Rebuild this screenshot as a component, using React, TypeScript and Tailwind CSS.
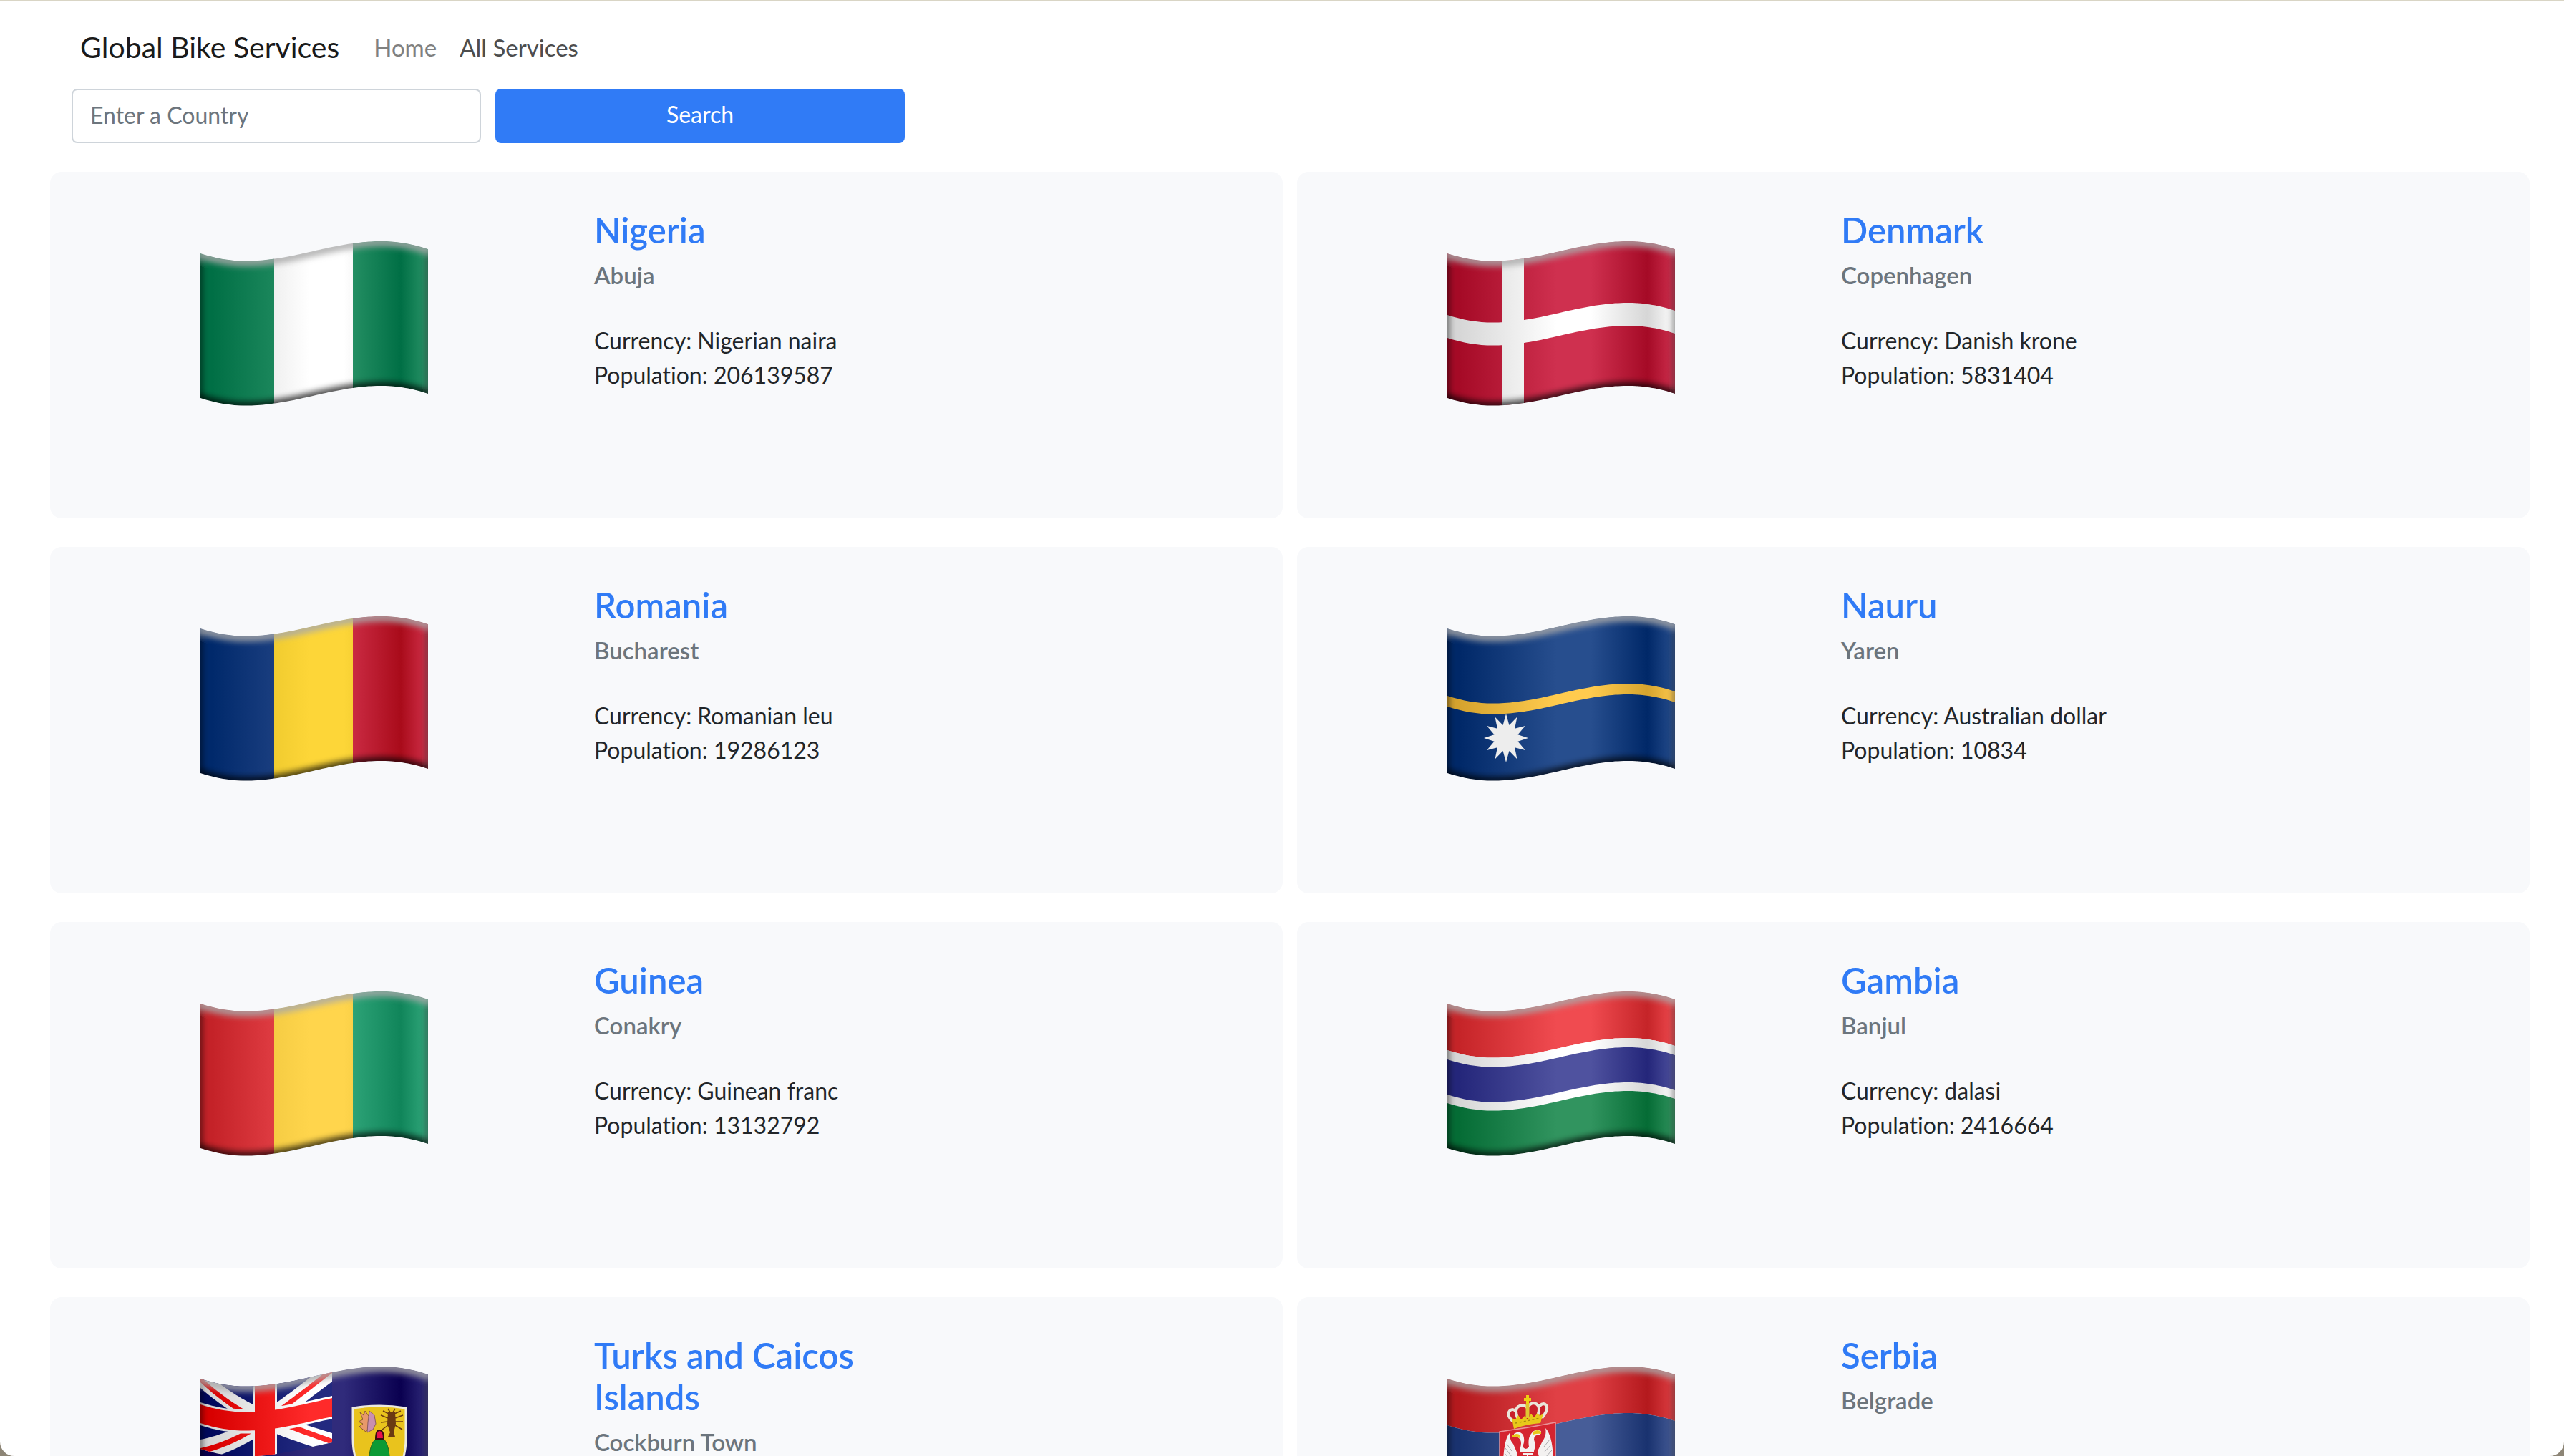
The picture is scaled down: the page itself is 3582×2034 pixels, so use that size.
import React, { useId } from "react";

const FLAG_W = 318;
const FLAG_H = 230;
const CLOTH_H = 202;

type Point = [number, number];
type Tone = { dark: string; light: string };

/** Vertical displacement of the cloth at a given x. */
function wave(x: number): number {
  if (x < 63) return 27.5 - 10.5 * ((63 - x) / 63) ** 2;
  if (x < 253) return 13.75 + 13.75 * Math.cos((Math.PI * (x - 63)) / 190);
  return 11 * ((x - 253) / 65) ** 2;
}

/** Bends a polygon given in flat cloth coordinates along the wave. */
function bend(points: Point[], close = true): string {
  const out: string[] = [];
  const last = close ? points.length : points.length - 1;
  for (let i = 0; i < last; i++) {
    const [x0, y0] = points[i];
    const [x1, y1] = points[(i + 1) % points.length];
    const steps = Math.max(1, Math.ceil(Math.abs(x1 - x0) / 4));
    for (let s = 0; s <= steps; s++) {
      const x = x0 + ((x1 - x0) * s) / steps;
      const y = y0 + ((y1 - y0) * s) / steps;
      out.push(`${x.toFixed(1)} ${(y + wave(x)).toFixed(1)}`);
    }
  }
  return `M${out.join("L")}${close ? "Z" : ""}`;
}

function rect(x0: number, y0: number, x1: number, y1: number): string {
  return bend([
    [x0, y0],
    [x1, y0],
    [x1, y1],
    [x0, y1],
  ]);
}

const TONES: Record<string, Tone> = {
  white: { dark: "#d6d6d6", light: "#ffffff" },
  ngGreen: { dark: "#006f45", light: "#2a9468" },
  dkRed: { dark: "#a50a26", light: "#cf304f" },
  roBlue: { dark: "#00296b", light: "#28498a" },
  roYellow: { dark: "#dcba20", light: "#fdd638" },
  roRed: { dark: "#a90b1a", light: "#d0304a" },
  nrBlue: { dark: "#002868", light: "#274e8e" },
  nrYellow: { dark: "#d5a32e", light: "#ffcb4e" },
  gnRed: { dark: "#c42228", light: "#ee4a50" },
  gnYellow: { dark: "#e4bd35", light: "#ffd54c" },
  gnGreen: { dark: "#10855a", light: "#32a87c" },
  gmRed: { dark: "#c52428", light: "#f04b50" },
  gmBlue: { dark: "#24267a", light: "#4f529f" },
  gmGreen: { dark: "#056c35", light: "#31945f" },
  tcBlue: { dark: "#0a0050", light: "#302b7b" },
  ukBlue: { dark: "#00085c", light: "#232a80" },
  ukRed: { dark: "#d80000", light: "#ff2a2a" },
  rsRed: { dark: "#b4191d", light: "#e04045" },
  rsBlue: { dark: "#19326f", light: "#475d98" },
};

type Band = { tone: string; box: [number, number, number, number] };

const vertical = (a: string, b: string, c: string): Band[] => [
  { tone: a, box: [0, 0, 103, CLOTH_H] },
  { tone: b, box: [103, 0, 213, CLOTH_H] },
  { tone: c, box: [213, 0, FLAG_W, CLOTH_H] },
];

const BANDS: Record<string, Band[]> = {
  ng: vertical("ngGreen", "white", "ngGreen"),
  dk: [
    { tone: "dkRed", box: [0, 0, FLAG_W, CLOTH_H] },
    { tone: "white", box: [77, 0, 107, CLOTH_H] },
    { tone: "white", box: [0, 86, FLAG_W, 118] },
  ],
  ro: vertical("roBlue", "roYellow", "roRed"),
  nr: [
    { tone: "nrBlue", box: [0, 0, FLAG_W, CLOTH_H] },
    { tone: "nrYellow", box: [0, 94, FLAG_W, 109] },
  ],
  gn: vertical("gnRed", "gnYellow", "gnGreen"),
  gm: [
    { tone: "gmRed", box: [0, 0, FLAG_W, 65] },
    { tone: "white", box: [0, 65, FLAG_W, 139] },
    { tone: "gmBlue", box: [0, 78, FLAG_W, 127] },
    { tone: "gmGreen", box: [0, 139, FLAG_W, CLOTH_H] },
  ],
  tc: [
    { tone: "tcBlue", box: [0, 0, FLAG_W, CLOTH_H] },
    { tone: "ukBlue", box: [0, 0, 184, 98] },
  ],
  rs: [
    { tone: "rsRed", box: [0, 0, FLAG_W, 65] },
    { tone: "rsBlue", box: [0, 65, FLAG_W, 134] },
    { tone: "white", box: [0, 134, FLAG_W, CLOTH_H] },
  ],
};

function starPoints(cx: number, cy: number, rx: number, ry: number): string {
  const pts: string[] = [];
  for (let i = 0; i < 24; i++) {
    const k = i % 2 === 0 ? 1 : 0.55;
    const a = (i * Math.PI) / 12 - Math.PI / 2;
    pts.push(`${(cx + rx * k * Math.cos(a)).toFixed(1)},${(cy + ry * k * Math.sin(a)).toFixed(1)}`);
  }
  return pts.join(" ");
}

function UnionCanton({ fill }: { fill: (tone: string) => string }) {
  const turn = (p: Point[]): Point[] => p.map(([x, y]) => [184 - x, 98 - y]);
  const whiteFall: Point[] = [[0, 0], [27, 0], [92, 36], [92, 62], [0, 13]];
  const whiteRise: Point[] = [[184, 0], [184, 13], [92, 62], [92, 34], [154, 0]];
  const redFall: Point[] = [[0, 0], [5, 0], [60, 32], [46, 32], [0, 5]];
  const redRise: Point[] = [[184, 0], [171, 0], [113, 32], [128, 32], [184, 1]];
  return (
    <g>
      {[whiteFall, whiteRise, turn(whiteFall), turn(whiteRise)].map((p, i) => (
        <path key={`w${i}`} d={bend(p)} fill={fill("white")} />
      ))}
      {[redFall, redRise, turn(redFall), turn(redRise)].map((p, i) => (
        <path key={`r${i}`} d={bend(p)} fill={fill("ukRed")} />
      ))}
      <path d={rect(0, 33, 184, 65)} fill={fill("white")} />
      <path d={rect(73, 0, 107, 98)} fill={fill("white")} />
      <path d={rect(0, 36, 184, 62)} fill={fill("ukRed")} />
      <path d={rect(76, 0, 104, 98)} fill={fill("ukRed")} />
    </g>
  );
}

function TurksShield() {
  return (
    <g>
      <path d="M213 58 Q250 52 287 58 V100 Q287 150 250 166 Q213 150 213 100Z" fill="#e9c31d" stroke="#eceae0" strokeWidth="3" />
      <path d="M223 64 L228 68 L230 62 L237 72 L238 82 L231 91 L222 84 L227 80 L221 77 L227 74Z" fill="#e8996a" stroke="#8a5a30" strokeWidth="1" />
      <path d="M236 62 L243 68 L245 80 L241 88 L233 92 L234 78Z" fill="#c98fb0" stroke="#8a5a60" strokeWidth="1" />
      <path d="M262 64 L272 64 L273 80 L270 92 L272 98 L262 98 L265 92 L261 80Z" fill="#6b3a12" />
      <path
        d="M263 66 L255 62 M271 66 L280 62 M262 72 L252 68 M272 72 L283 68 M262 77 L252 78 M272 77 L283 77 M262 82 L254 88 M272 82 L282 88 M265 64 L262 59 M269 64 L272 59"
        stroke="#6b3a12"
        strokeWidth="1.5"
        fill="none"
      />
      <path d="M236 124 Q238 104 247 100 H254 Q262 104 264 124 V146 H236Z" fill="#0c9a35" stroke="#2a6a20" strokeWidth="1" />
      <path d="M245 101 Q245 89 250 89 Q256 89 256 101Z" fill="#e8104a" stroke="#3a1010" strokeWidth="2" />
    </g>
  );
}

function SerbianArms() {
  return (
    <g>
      <path d="M73 91 Q112 86 151 78 V150 Q151 172 112 182 Q73 172 73 150Z" fill="#d52530" stroke="#e8949a" strokeWidth="1.5" />
      <path
        d="M92 82 Q83 72 84 66 Q86 59 93 61 Q99 52 111 54 Q124 46 131 53 Q140 49 140 58 Q140 65 131 76Z"
        fill="#c9202a"
      />
      <g fill="none" stroke="#e9e6da" strokeWidth="4">
        <path d="M92 77 Q82 68 87 62 Q91 58 95 62" />
        <path d="M98 72 Q93 58 101 55 Q107 53 111 57" />
        <path d="M112 57 Q117 49 124 52 Q131 56 126 69" />
        <path d="M129 55 Q134 50 138 54 Q142 60 132 72" />
        <path d="M112 52 V72" stroke="#dfc733" strokeWidth="5" />
      </g>
      <path d="M110 40 h4 v4 h3 v4 h-3 v5 h-4 v-5 h-3 v-4 h3Z" fill="#ecd012" />
      <path
        d="M90 72 L95 74 L99 68 L103 74 L108 69 L112 74 L117 66 L121 71 L126 65 L129 69 L134 66 L130 79 Q112 80 93 87Z"
        fill="#e8c81a"
      />
      <path d="M95 79 Q112 76 129 72" stroke="#a88a10" strokeWidth="1.5" strokeDasharray="3 3" fill="none" />
      <g fill="#f3f1f0">
        <path d="M88 92 Q80 98 78 130 L92 150 L98 122 L92 108 Q86 102 88 92Z" />
        <path d="M137 86 Q147 96 148 130 L134 150 L126 118 L133 104 Q139 96 137 86Z" />
        <path d="M93 94 Q101 88 106 96 Q109 104 105 112 Q110 118 114 112 Q112 100 117 94 Q122 86 131 90 L129 95 Q121 95 121 102 Q124 110 121 118 L123 150 H102 L101 116 Q105 106 101 101 Q98 97 93 99Z" />
      </g>
      <g fill="none" stroke="#a8a8ac" strokeWidth="1">
        <path d="M83 108 L90 118 M81 114 L90 126 M80 121 L89 132" />
        <path d="M143 102 L135 112 M145 109 L135 120 M146 117 L136 128" />
      </g>
      <path d="M91 96 Q97 92 102 96 L101 100 Q95 97 91 99Z M131 91 Q126 87 120 91 L120 95 Q126 93 131 94Z" fill="#e8c81a" />
      <path d="M102 120 H123 V128 H115 V140 H110 V128 H102Z" fill="#d52530" />
      <path d="M106 122 H119 M112 122 V138" stroke="#f3f1f0" strokeWidth="2" />
    </g>
  );
}

function Flag({ code, label }: { code: string; label: string }) {
  const id = useId().replace(/[^a-zA-Z0-9]/g, "");
  const tones = new Set(BANDS[code].map((b) => b.tone));
  tones.add("white");
  if (code === "tc") tones.add("ukRed");
  const fill = (tone: string) => `url(#${id}${tone})`;
  const edge = (y: number) => bend([[-4, y], [322, y]], false);
  return (
    <svg
      width={FLAG_W}
      height={FLAG_H}
      viewBox={`0 0 ${FLAG_W} ${FLAG_H}`}
      role="img"
      aria-label={label}
      className="shrink-0"
    >
      <defs>
        {[...tones].map((name) => {
          const { dark, light } = TONES[name];
          return (
            <linearGradient key={name} id={`${id}${name}`} gradientUnits="userSpaceOnUse" x1="0" y1="0" x2={FLAG_W} y2="0">
              <stop offset="0.05" stopColor={dark} />
              <stop offset="0.48" stopColor={light} />
              <stop offset="0.63" stopColor={light} />
              <stop offset="0.88" stopColor={dark} />
              <stop offset="1" stopColor={light} />
            </linearGradient>
          );
        })}
        <clipPath id={`${id}cloth`}>
          <path d={rect(0, 0, FLAG_W, CLOTH_H)} />
        </clipPath>
        <filter id={`${id}soft`} x="-10%" y="-30%" width="120%" height="160%">
          <feGaussianBlur stdDeviation="4" />
        </filter>
      </defs>
      <g clipPath={`url(#${id}cloth)`}>
        {BANDS[code].map((b, i) => (
          <path key={i} d={rect(...b.box)} fill={fill(b.tone)} />
        ))}
        {code === "nr" && <polygon points={starPoints(82, 170, 31, 34)} fill="#ededed" />}
        {code === "tc" && <UnionCanton fill={fill} />}
        {code === "tc" && <TurksShield />}
        {code === "rs" && <SerbianArms />}
        <g filter={`url(#${id}soft)`} fill="none">
          <path d={edge(1)} stroke="#a9a9a9" strokeOpacity="0.85" strokeWidth="13" />
          <path d={edge(CLOTH_H + 1)} stroke="#000000" strokeOpacity="0.7" strokeWidth="13" />
          <path d={`M-1 24V${FLAG_H - 6}`} stroke="#000000" strokeOpacity="0.55" strokeWidth="8" />
          <path d={`M${FLAG_W + 1} 16V${FLAG_H - 6}`} stroke="#303030" strokeOpacity="0.6" strokeWidth="8" />
        </g>
      </g>
    </svg>
  );
}

type Country = {
  code: string;
  name: string;
  capital: string;
  currency?: string;
  population?: number;
};

const COUNTRIES: Country[] = [
  { code: "ng", name: "Nigeria", capital: "Abuja", currency: "Nigerian naira", population: 206139587 },
  { code: "dk", name: "Denmark", capital: "Copenhagen", currency: "Danish krone", population: 5831404 },
  { code: "ro", name: "Romania", capital: "Bucharest", currency: "Romanian leu", population: 19286123 },
  { code: "nr", name: "Nauru", capital: "Yaren", currency: "Australian dollar", population: 10834 },
  { code: "gn", name: "Guinea", capital: "Conakry", currency: "Guinean franc", population: 13132792 },
  { code: "gm", name: "Gambia", capital: "Banjul", currency: "dalasi", population: 2416664 },
  { code: "tc", name: "Turks and Caicos Islands", capital: "Cockburn Town" },
  { code: "rs", name: "Serbia", capital: "Belgrade" },
];

function CountryCard({ country }: { country: Country }) {
  return (
    <article className="grid min-h-[484px] grid-cols-[3fr_4fr] rounded-2xl bg-[#f8f9fb]">
      <div className="flex items-start justify-center pt-[97px]">
        <Flag code={country.code} label={`Flag of ${country.name}`} />
      </div>
      <div className="max-w-[460px] pt-[52px] pl-[22px]">
        <h2 className="text-[49px] leading-[58px] font-semibold text-[#307bf6]">
          <a href={`#${country.code}`}>{country.name}</a>
        </h2>
        <h3 className="mt-[10px] text-[33px] leading-[48px] font-semibold text-[#6c757d]">{country.capital}</h3>
        {country.currency && (
          <p className="mt-11 text-[32px] leading-[48px] text-[#212529]">
            Currency: {country.currency}
            <br />
            Population: {country.population}
          </p>
        )}
      </div>
    </article>
  );
}

export default function App() {
  return (
    <div className="h-screen overflow-hidden bg-[#8d8576] font-[Lato,'Open_Sans',sans-serif] [font-variant-ligatures:none]">
      <div className="h-full overflow-hidden rounded-b-[20px] border-t-2 border-[#d9d5c5] bg-white">
        <nav className="flex items-center pt-[34px] pl-28">
          <a href="#brand" className="mr-8 text-[41px] leading-[60px] text-[#1a1a1a]">
            Global Bike Services
          </a>
          <a href="#home" className="px-4 text-[33px] leading-[48px] text-[#808080]">
            Home
          </a>
          <a href="#services" className="px-4 text-[33px] leading-[48px] text-[#4d4d4d]">
            All Services
          </a>
        </nav>
        <form className="mt-7 flex gap-5 pl-[100px]" onSubmit={(e) => e.preventDefault()}>
          <input
            type="text"
            aria-label="Country"
            placeholder="Enter a Country"
            className="h-[76px] w-[572px] rounded-lg border-2 border-[#ced4da] px-6 pb-1 text-[32px] leading-[48px] text-[#212529] placeholder:text-[#6c757d]"
          />
          <button type="submit" className="h-[76px] w-[572px] rounded-lg bg-[#307bf6] pb-1 text-[32px] leading-[48px] text-white">
            Search
          </button>
        </form>
        <main className="mt-10 grid grid-cols-2 gap-x-5 gap-y-10 pr-12 pl-[70px]">
          {COUNTRIES.map((c) => (
            <CountryCard key={c.code} country={c} />
          ))}
        </main>
      </div>
    </div>
  );
}
